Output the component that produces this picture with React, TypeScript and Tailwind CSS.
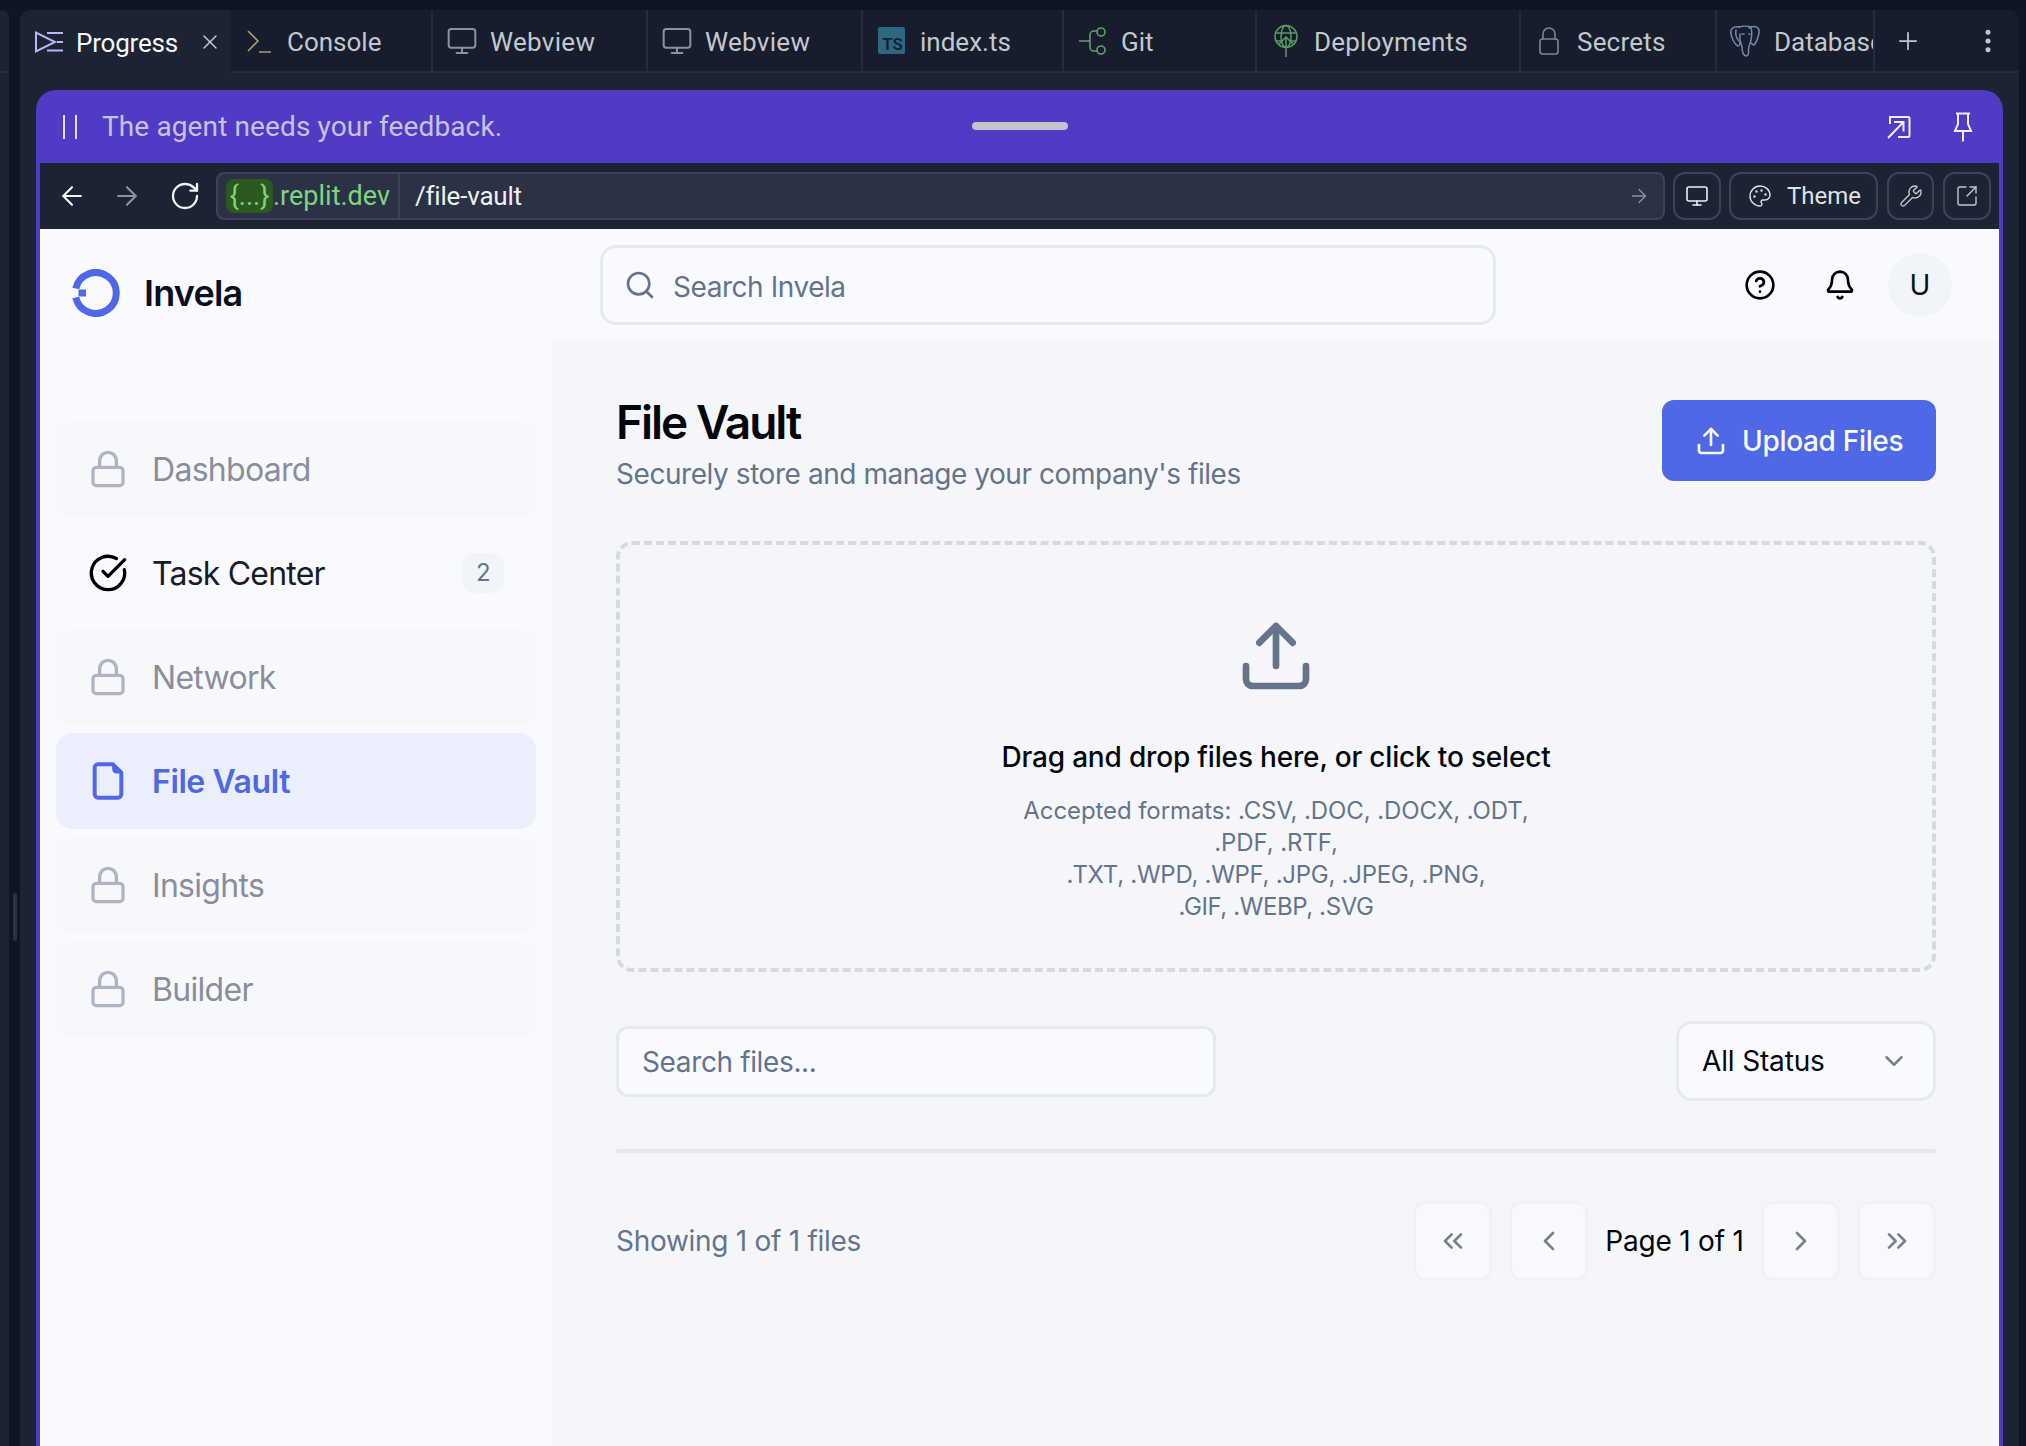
import React from "react";
import { ArrowLeft, ArrowRight, RotateCw, Monitor, Lock, Palette, Wrench, SquareArrowOutUpRight, Plus, EllipsisVertical, X, Search, CircleHelp, Bell, CircleCheckBig, Upload, ChevronDown, ChevronsLeft, ChevronLeft, ChevronRight, ChevronsRight } from "lucide-react";

function ProgressIcon() {
  return (
    <svg width="30" height="24" viewBox="0 0 30 24" fill="none" stroke="#bdb4f4" strokeWidth="2" className="shrink-0">
      <path d="M2 2.5 V21.5 L21 12 Z" />
      <path d="M13 3 H29 M23 12 H29 M13 20.5 H29" />
    </svg>
  );
}

function ConsoleIcon() {
  return (
    <svg width="26" height="26" viewBox="0 0 26 26" fill="none" strokeWidth="1.6" className="shrink-0">
      <path d="M2 3 L12 13 L2 23" stroke="#a79f6a" />
      <path d="M13 24 H25" stroke="#a79f6a" />
    </svg>
  );
}

function GitIcon() {
  return (
    <svg width="30" height="30" viewBox="0 0 30 30" fill="none" stroke="#5fa36a" strokeWidth="1.6" className="shrink-0">
      <path d="M1 15 H12 M12 15 V9 A4 4 0 0 1 16 5 H19 M12 15 V21 A4 4 0 0 0 16 25 H19" />
      <circle cx="23" cy="6" r="4" />
      <circle cx="23" cy="24" r="4" />
    </svg>
  );
}

function DeployIcon() {
  return (
    <svg width="26" height="34" viewBox="0 0 26 34" fill="none" stroke="#5a9a62" strokeWidth="1.5" className="shrink-0">
      <circle cx="13" cy="12.5" r="11" />
      <ellipse cx="13" cy="12.5" rx="5" ry="11" />
      <path d="M2 9 H24 M3 17 H8 M18 17 H23" />
      <path d="M13 33 V13 M6 20 L13 13 L20 20" />
    </svg>
  );
}

function TallLock() {
  return (
    <svg width="20" height="28" viewBox="0 0 20 28" fill="none" stroke="#7f858f" strokeWidth="1.6" className="shrink-0">
      <rect x="1" y="12" width="18" height="15" rx="2.5" />
      <path d="M4 12 V7 A6 6 0 0 1 16 7 V12" />
    </svg>
  );
}

function Elephant() {
  return (
    <svg width="32" height="32" viewBox="0 0 32 32" fill="none" stroke="#6c8cb0" strokeWidth="1.5" strokeLinecap="round" className="shrink-0">
      <path d="M10 2 C4 1 1 4 2 9 C3 14 6 20 9 21 C10 21 11 19 11 17" />
      <path d="M10 2 C13 1 19 1 22 2" />
      <path d="M20 3 C26 0 31 2 30 8 C29 13 27 18 25 20 C24 20 23 19 22 18" />
      <path d="M11 9 C10 14 12 18 13 22 C13 26 14 30 17 31 C19 31 20 29 19.5 26 C19 23 21 19 22 15 C23 10 23 6 22 3" />
      <path d="M7 5 C6 10 8 14 10 16" />
      <path d="M13 9 H15 M20 9 H21" />
    </svg>
  );
}

function Tab({ w, active, children }: { w: string; active?: boolean; children: React.ReactNode }) {
  return (
    <div className={`${w} h-full shrink-0 flex items-center overflow-hidden whitespace-nowrap ${active ? "bg-[#1c2333] text-[#f5f6f8]" : "border-b-2 border-r-2 border-[#252c3e] text-[#c2c8cc]"}`}>
      {children}
    </div>
  );
}

function TabLabel({ className, children }: { className: string; children: React.ReactNode }) {
  return <span className={`${className} pt-[3px]`}>{children}</span>;
}

function NavItem({ label, icon, active, locked, badge }: { label: string; icon?: React.ReactNode; active?: boolean; locked?: boolean; badge?: string }) {
  return (
    <div className={`h-[96px] rounded-[16px] px-8 flex items-center gap-6 text-[32px] ${active ? "bg-[#ebeefc] text-[#4f68e5] font-semibold tracking-[-0.4px]" : locked ? "bg-[#f7f8fc] text-[#8a8e9b] tracking-[-0.7px]" : "text-[#171c2b] tracking-[-0.8px]"}`}>
      {locked ? <Lock size={40} strokeWidth={2} className="text-[#adb5c4] shrink-0" /> : icon}
      <span className="flex-1 pt-[2px]">{label}</span>
      {badge && <span className="w-[42px] h-[40px] rounded-[12px] bg-[#f1f5f9] text-[#64748b] text-[24px] flex items-center justify-center">{badge}</span>}
    </div>
  );
}

function PagerBtn({ children }: { children: React.ReactNode }) {
  return (
    <div className="w-[79px] h-[80px] rounded-[12px] border-[3px] border-[#f0f2f6] bg-[#f8f9fc] flex items-center justify-center text-[#7b7f8a]">
      {children}
    </div>
  );
}

export default function App() {
  return (
    <div className="w-[2026px] h-[1446px] bg-[#0e1525] flex overflow-hidden font-['Inter',sans-serif]">
      {/* left sliver */}
      <div className="w-[9px] h-full pt-[10px] shrink-0">
        <div className="h-full bg-[#1c2333] rounded-tr-[8px]">
          <div className="h-[63px] border-b-2 border-[#252c3e]" />
        </div>
      </div>
      {/* gutter */}
      <div className="w-[11px] shrink-0 pt-[893px] flex justify-center">
        <div className="w-[4px] h-[48px] rounded-full bg-[#2b3245]" />
      </div>
      {/* main pane */}
      <div className="w-[1999px] shrink-0 mt-[10px] bg-[#1c2333] rounded-t-[10px] overflow-hidden flex flex-col font-['Roboto',sans-serif]">
        <div className="h-[63px] shrink-0 flex bg-[#171d2d] text-[26px]">
          <Tab w="w-[211px]" active>
            <span className="ml-[14px]"><ProgressIcon /></span>
            <TabLabel className="ml-[12px] w-[109px] tracking-[-0.2px]">Progress</TabLabel>
            <X size={24} strokeWidth={1.5} className="ml-[13px] text-[#c2c8cc]" />
          </Tab>
          <Tab w="w-[202px]">
            <span className="ml-[15px]"><ConsoleIcon /></span>
            <TabLabel className="ml-[15px]">Console</TabLabel>
          </Tab>
          <Tab w="w-[215px]">
            <Monitor size={32} strokeWidth={1.5} className="ml-[13px] text-[#8d939e] shrink-0" />
            <TabLabel className="ml-[12px] tracking-[0.3px]">Webview</TabLabel>
          </Tab>
          <Tab w="w-[215px]">
            <Monitor size={32} strokeWidth={1.5} className="ml-[13px] text-[#8d939e] shrink-0" />
            <TabLabel className="ml-[12px] tracking-[0.3px]">Webview</TabLabel>
          </Tab>
          <Tab w="w-[201px]">
            <span className="ml-[15px] w-[27px] h-[27px] rounded-[2px] bg-[#2f6781] text-[#0f2433] text-[17px] leading-none flex items-end justify-end pr-[2px] pb-[1px] font-semibold">TS</span>
            <TabLabel className="ml-[15px]">index.ts</TabLabel>
          </Tab>
          <Tab w="w-[193px]">
            <span className="ml-[14px]"><GitIcon /></span>
            <TabLabel className="ml-[13px]">Git</TabLabel>
          </Tab>
          <Tab w="w-[264px]">
            <span className="ml-[16px]"><DeployIcon /></span>
            <TabLabel className="ml-[15px] tracking-[0.2px]">Deployments</TabLabel>
          </Tab>
          <Tab w="w-[196px]">
            <span className="ml-[18px]"><TallLock /></span>
            <TabLabel className="ml-[18px] tracking-[0.2px]">Secrets</TabLabel>
          </Tab>
          <Tab w="w-[158px]">
            <span className="ml-[12px]"><Elephant /></span>
            <TabLabel className="ml-[13px]">Database</TabLabel>
          </Tab>
          <div className="flex-1 h-full border-b-2 border-[#252c3e] flex items-center text-[#c2c8cc]">
            <Plus size={28} strokeWidth={1.5} className="ml-[19px]" />
            <EllipsisVertical size={30} strokeWidth={2} className="ml-[51px]" />
          </div>
        </div>

        <div className="flex-1 min-h-0 pt-[17px] px-[16px]">
          <div className="h-full bg-[#4f3bc4] rounded-t-[20px] px-[4px] flex flex-col">
            {/* banner */}
            <div className="h-[73px] shrink-0 flex items-center text-[28px] tracking-[0.12px] text-[#c6c3df] relative">
              <div className="ml-[23px] w-[14px] h-[24px] border-x-2 border-[#e2dff5]" />
              <span className="ml-[25px]">The agent needs your feedback.</span>
              <div className="absolute left-[932px] top-[32px] w-[96px] h-[8px] rounded-full bg-[#c3c5cd]" />
              <div className="ml-auto flex items-center mr-[26px] gap-[42px] text-[#f1eefc]">
                <svg width="24" height="24" viewBox="0 0 24 24" fill="none" stroke="currentColor" strokeWidth="2">
                  <path d="M3 9 V2 H21 A1.5 1.5 0 0 1 22.5 3.5 V20.5 A1.5 1.5 0 0 1 21 22 H11" />
                  <path d="M1 23 L16 7.5 M7 7 H16.5 V16.5" />
                </svg>
                <svg width="20" height="30" viewBox="0 0 20 30" fill="none" stroke="currentColor" strokeWidth="2">
                  <path d="M3 1.5 H17 M5 1.5 V12 L2 19 H18 L15 12 V1.5" />
                  <path d="M10 19 V29.5" />
                </svg>
              </div>
            </div>
            {/* url bar */}
            <div className="h-[66px] shrink-0 bg-[#1c2333] flex items-center text-[26px] text-[#eef0f2]">
              <ArrowLeft size={30} strokeWidth={1.7} className="ml-[17px] text-[#f1f3f5]" />
              <ArrowRight size={30} strokeWidth={1.7} className="ml-[25px] text-[#8d939e]" />
              <RotateCw size={32} strokeWidth={1.7} className="ml-[27px] text-[#f1f3f5]" />
              <div className="ml-[15px] w-[1449px] h-[48px] rounded-[8px] border-2 border-[#3c445c] bg-[#2b3245] flex items-center">
                <div className="w-[182px] h-full border-r-2 border-[#3c445c] flex items-center pl-[8px] text-[27px] text-[#7fd47f]">
                  <span className="w-[47px] h-[34px] rounded-[8px] bg-[#2a5a1e] flex items-center justify-center">{"{...}"}</span>
                  <span>.replit.dev</span>
                </div>
                <span className="ml-[15px] tracking-[-0.2px]">/file-vault</span>
                <ArrowRight size={22} strokeWidth={1.5} className="ml-auto mr-[13px] text-[#8d939e]" />
              </div>
              <div className="ml-[8px] w-[48px] h-[48px] rounded-[12px] border-2 border-[#3c445c] flex items-center justify-center">
                <Monitor size={24} strokeWidth={1.6} />
              </div>
              <div className="ml-[8px] w-[149px] h-[48px] rounded-[12px] border-2 border-[#3c445c] flex items-center pl-[17px] gap-[15px] text-[24px] text-[#dfe2e6]">
                <Palette size={24} strokeWidth={1.4} />
                <span>Theme</span>
              </div>
              <div className="ml-[9px] w-[47px] h-[48px] rounded-[12px] border-2 border-[#3c445c] flex items-center justify-center text-[#c2c8cc]">
                <Wrench size={24} strokeWidth={1.4} />
              </div>
              <div className="ml-[9px] w-[48px] h-[48px] rounded-[12px] border-2 border-[#3c445c] flex items-center justify-center text-[#c2c8cc]">
                <SquareArrowOutUpRight size={24} strokeWidth={1.4} />
              </div>
            </div>
            {/* app */}
            <div className="flex-1 min-h-0 flex font-['Inter',sans-serif] bg-[#f5f6fa]">
              <aside className="w-[512px] shrink-0 bg-[#f9fafe] flex flex-col">
                <div className="h-[192px] pl-[32px] pt-[40px] flex items-start gap-[24px] shrink-0">
                  <svg width="48" height="48" viewBox="0 0 48 48" fill="none" className="shrink-0">
                    <path d="M3.8 19.5 A20.5 20.5 0 1 1 3.8 28.5" stroke="#4f68e5" strokeWidth="7" />
                    <rect x="6.5" y="20.5" width="7.5" height="7" fill="#4f68e5" />
                  </svg>
                  <span className="text-[36px] leading-[48px] font-semibold tracking-[-0.8px] text-[#0b0f1c]">Invela</span>
                </div>
                <nav className="px-[16px] flex flex-col gap-[8px]">
                  <NavItem label="Dashboard" locked />
                  <NavItem label="Task Center" badge="2" icon={<CircleCheckBig size={40} strokeWidth={2} className="text-black shrink-0" />} />
                  <NavItem label="Network" locked />
                  <NavItem
                    label="File Vault"
                    active
                    icon={
                      <svg width="40" height="40" viewBox="0 0 24 24" fill="none" stroke="#4f68e5" strokeWidth="2.4" strokeLinejoin="round" className="shrink-0">
                        <path d="M6 2a2 2 0 0 0-2 2v16a2 2 0 0 0 2 2h12a2 2 0 0 0 2-2V7l-5-5z" />
                        <path d="M15 2l5 5h-3a2 2 0 0 1-2-2z" fill="#4f68e5" strokeWidth="1" />
                      </svg>
                    }
                  />
                  <NavItem label="Insights" locked />
                  <NavItem label="Builder" locked />
                </nav>
              </aside>
              <div className="flex-1 min-w-0 flex flex-col">
                <header className="h-[112px] shrink-0 bg-[#f9fafe] flex items-center">
                  <div className="ml-[48px] w-[896px] h-[80px] rounded-[16px] border-[3px] border-[#e6eaef] flex items-center pl-[22px] gap-[16px] text-[28px] tracking-[-0.45px] text-[#64748b]">
                    <Search size={32} strokeWidth={2} className="text-[#64748b] -ml-[1px]" />
                    <span className="pt-[3px] ml-[1px]">Search Invela</span>
                  </div>
                  <CircleHelp size={32} strokeWidth={2} className="ml-[248px] text-black" />
                  <Bell size={32} strokeWidth={2} className="ml-[48px] text-black" />
                  <div className="ml-[32px] w-[64px] h-[64px] rounded-full bg-[#f1f5f9] flex items-center justify-center text-[28px] text-[#0b0f1c]">U</div>
                </header>
                <main className="flex-1 min-h-0 pl-[64px] pr-[63px] pt-[59px]">
                  <div className="flex items-start justify-between h-[81px]">
                    <div>
                      <h1 className="text-[46px] leading-[48px] font-semibold tracking-[-2px] text-[#04060d] mt-[-2px]">File Vault</h1>
                      <p className="mt-[8px] text-[28px] leading-[40px] tracking-[-0.44px] text-[#64748b]">Securely store and manage your company's files</p>
                    </div>
                    <div className="w-[274px] h-[81px] rounded-[12px] bg-[#4f68e5] flex items-center pl-[33px] gap-[15px] text-[28px] font-medium tracking-[-0.32px] text-[#f8fafc]">
                      <Upload size={32} strokeWidth={2} />
                      <span>Upload Files</span>
                    </div>
                  </div>
                  <div className="mt-[60px] h-[431px] rounded-[16px] border-4 border-dashed border-[#d5dae1] flex flex-col items-center">
                    <Upload size={80} strokeWidth={2} className="mt-[71px] text-[#64748b]" />
                    <p className="mt-[41px] text-[28px] leading-[40px] font-medium tracking-[-0.18px] text-[#04060d]">Drag and drop files here, or click to select</p>
                    <p className="mt-[18px] text-[24px] leading-[32px] tracking-[-0.09px] text-[#64748b] text-center">
                      Accepted formats: .CSV, .DOC, .DOCX, .ODT,<br />
                      .PDF, .RTF,<br />
                      <span className="tracking-[-0.27px]">.TXT, .WPD, .WPF, .JPG, .JPEG, .PNG,</span><br />
                      <span className="tracking-[-0.4px]">.GIF, .WEBP, .SVG</span>
                    </p>
                  </div>
                  <div className="mt-[49px] flex items-center justify-between">
                    <div className="w-[600px] h-[71px] rounded-[12px] border-[3px] border-[#e6eaef] bg-[#f9fafe] flex items-center pl-[23px] text-[28px] tracking-[-0.37px] text-[#64748b]">
                      <span className="pt-[2px]">Search files...</span>
                    </div>
                    <div className="w-[260px] h-[80px] rounded-[16px] border-[3px] border-[#e6eaef] bg-[#f9fafe] flex items-center pl-[23px] text-[28px] tracking-[-0.15px] text-[#04060d]">
                      <span className="flex-1">All Status</span>
                      <ChevronDown size={30} strokeWidth={2} className="mr-[24px] text-[#7b7f8a]" />
                    </div>
                  </div>
                  <div className="mt-[48px] h-[4px] bg-[#e4e8ee] rounded-full" />
                  <div className="mt-[48px] flex items-center justify-between">
                    <span className="text-[28px] tracking-[-0.28px] text-[#64748b]">Showing 1 of 1 files</span>
                    <div className="flex items-center gap-[17px] text-[28px] tracking-[-0.2px] text-[#04060d]">
                      <PagerBtn><ChevronsLeft size={32} strokeWidth={2} /></PagerBtn>
                      <PagerBtn><ChevronLeft size={32} strokeWidth={2} /></PagerBtn>
                      <span className="w-[139px] text-center">Page 1 of 1</span>
                      <PagerBtn><ChevronRight size={32} strokeWidth={2} /></PagerBtn>
                      <PagerBtn><ChevronsRight size={32} strokeWidth={2} /></PagerBtn>
                    </div>
                  </div>
                </main>
              </div>
            </div>
          </div>
        </div>
      </div>
      <div className="flex-1 bg-[#0e1525]" />
    </div>
  );
}
